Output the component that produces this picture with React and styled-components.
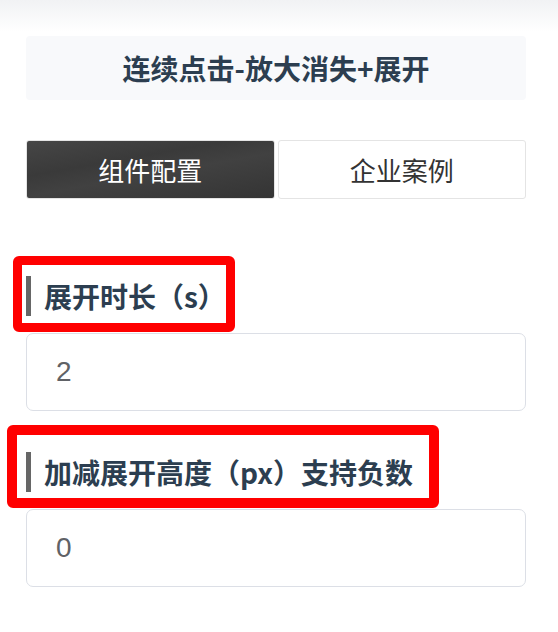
import React from "react";
import styled, { createGlobalStyle } from "styled-components";

const Global = createGlobalStyle`
  html, body { margin: 0; padding: 0; background: #fff; }
  body { font-family: "Noto Sans CJK SC", "Noto Sans", sans-serif; }
  * { box-sizing: border-box; }
`;

const Page = styled.div`
  width: 558px;
  min-height: 632px;
  background: linear-gradient(to bottom, #f1f2f4 0px, #ffffff 32px);
  padding: 36px 32px 0 26px;
  display: flex;
  flex-direction: column;
`;

const TitleBox = styled.div`
  height: 64px;
  background: #f8f9fb;
  border-radius: 4px;
  display: flex;
  align-items: center;
  justify-content: center;
  font-size: 28px;
  font-weight: 700;
  color: #2c3e50;
`;

const Tabs = styled.div`
  margin-top: 40px;
  display: grid;
  grid-template-columns: 1fr 1fr;
  gap: 3px;
  height: 59px;
`;

const Tab = styled.div`
  display: flex;
  align-items: center;
  justify-content: center;
  border: 1.5px solid #e4e4e4;
  border-radius: 3px;
  font-size: 26px;
  font-weight: 400;
  color: ${(p) => (p.$active ? "#ffffff" : "#333333")};
  background: ${(p) =>
    p.$active
      ? "linear-gradient(170deg, #464646 0%, #3a3a3a 35%, #414141 55%, #343434 100%)"
      : "#ffffff"};
`;

const Highlight = styled.div`
  align-self: flex-start;
  margin-top: ${(p) => p.$top}px;
  margin-left: ${(p) => -p.$shift}px;
  border: ${(p) => p.$border}px solid #ff0000;
  border-radius: 6px;
  padding: ${(p) => `${p.$pt}px ${p.$pr}px ${p.$pb}px ${p.$pl}px`};
`;

const LabelRow = styled.div`
  display: flex;
  align-items: center;
  gap: 13px;
  height: 40px;
`;

const Bar = styled.span`
  width: 5px;
  height: 40px;
  background: #666666;
`;

const LabelText = styled.span`
  font-size: 28px;
  font-weight: 700;
  color: #2c3e50;
  white-space: nowrap;
  line-height: 40px;
`;

const Input = styled.input`
  margin-top: 1px;
  width: 100%;
  height: 78px;
  border: 1.5px solid #dcdfe6;
  border-radius: 7px;
  padding: 0 0 0 29px;
  font-family: "Liberation Sans", Arial, sans-serif;
  font-size: 28px;
  color: #606266;
  background: #fff;
  outline: none;
`;

function Field({ label, value, hl }) {
  return (
    <>
      <Highlight {...hl}>
        <LabelRow>
          <Bar />
          <LabelText>{label}</LabelText>
        </LabelRow>
      </Highlight>
      <Input defaultValue={value} />
    </>
  );
}

export default function App() {
  return (
    <>
      <Global />
      <Page>
        <TitleBox>连续点击-放大消失+展开</TitleBox>
        <Tabs>
          <Tab $active>组件配置</Tab>
          <Tab>企业案例</Tab>
        </Tabs>
        <Field
          label="展开时长（s）"
          value="2"
          hl={{ $top: 57, $shift: 13, $border: 9, $pt: 11, $pb: 7, $pl: 4, $pr: 0 }}
        />
        <Field
          label="加减展开高度（px）支持负数"
          value="0"
          hl={{ $top: 14, $shift: 19, $border: 10, $pt: 17, $pb: 6, $pl: 9, $pr: 16 }}
        />
      </Page>
    </>
  );
}
